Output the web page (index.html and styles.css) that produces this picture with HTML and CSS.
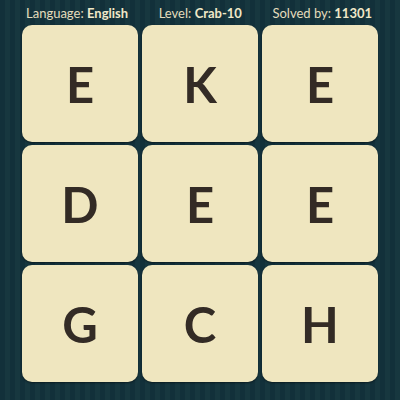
FILE: index.html
```html
<!DOCTYPE html>
<html>
<head>
<meta charset="utf-8">
<link rel="stylesheet" href="styles.css">
</head>
<body>
<div class="page">
  <div class="header">
    <span class="info">Language: <b>English</b></span>
    <span class="info">Level: <b>Crab-10</b></span>
    <span class="info">Solved by: <b>11301</b></span>
  </div>
  <div class="board">
    <div class="tile">E</div>
    <div class="tile">K</div>
    <div class="tile">E</div>
    <div class="tile">D</div>
    <div class="tile">E</div>
    <div class="tile">E</div>
    <div class="tile">G</div>
    <div class="tile">C</div>
    <div class="tile">H</div>
  </div>
</div>
</body>
</html>
```
FILE: styles.css
```css
html, body {
  margin: 0;
  padding: 0;
}
.page {
  width: 400px;
  height: 400px;
  overflow: hidden;
  background: repeating-linear-gradient(to right, #12303a 0px, #12303a 5px, #17373f 5px, #17373f 10px);
  font-family: Lato, "Liberation Sans", sans-serif;
}
.header {
  height: 25px;
  display: flex;
  justify-content: space-between;
  align-items: center;
  padding: 0 28px 0 26px;
  box-sizing: border-box;
  color: #e4dcbc;
  font-size: 13px;
}
.header b {
  font-weight: 700;
  color: #f0e8c8;
}
.board {
  display: grid;
  grid-template-columns: repeat(3, 116px);
  grid-template-rows: repeat(3, 117px);
  column-gap: 4px;
  row-gap: 3px;
  padding-left: 22px;
}
.tile {
  background: #efe6bf;
  border-radius: 10px;
  box-shadow: 0 1px 2px rgba(0, 0, 0, 0.45);
  display: flex;
  align-items: center;
  justify-content: center;
  color: #332b25;
  font-size: 49px;
  font-weight: 700;
}
```
